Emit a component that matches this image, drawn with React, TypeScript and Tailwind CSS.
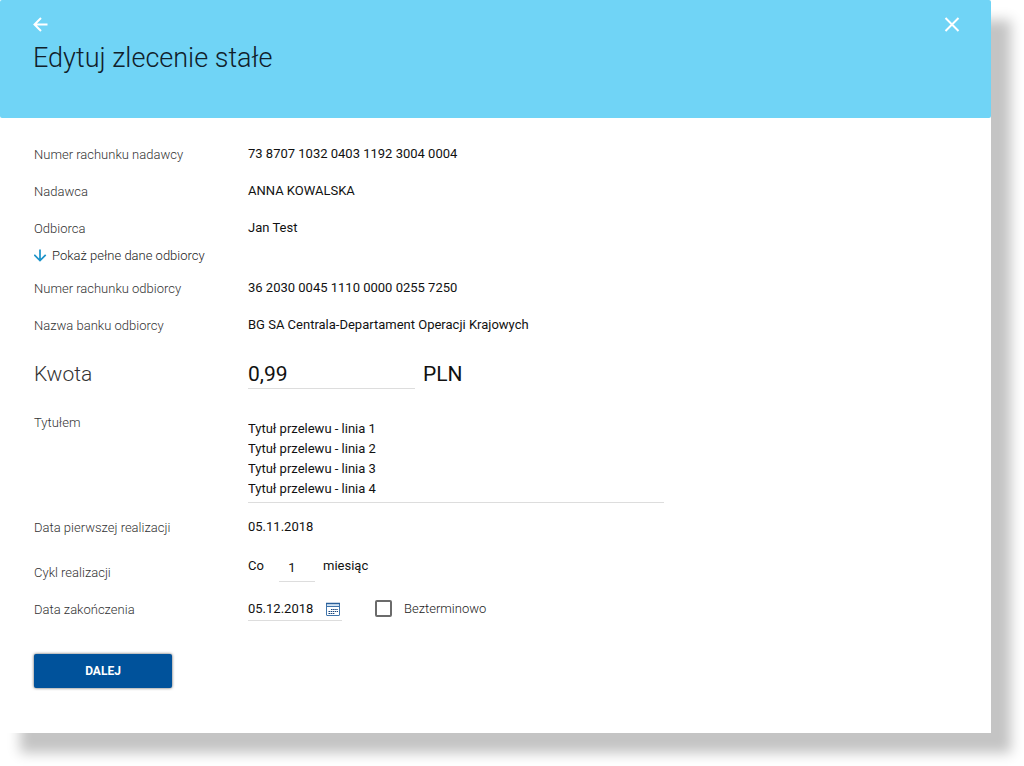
import { useState } from "react";
import type { ReactNode } from "react";

// ─── Icons ────────────────────────────────────────────────────────────────────
function BackIcon() {
  return (
    <svg viewBox="0 0 16 16" className="h-4 w-4" fill="none" stroke="currentColor" strokeWidth="2">
      <path d="M14.5 8.5H2M8 2 1.5 8.5 8 15" />
    </svg>
  );
}

function CloseIcon() {
  return (
    <svg viewBox="0 0 16 16" className="h-4 w-4" fill="none" stroke="currentColor" strokeWidth="2">
      <path d="M1.5 2 14.5 15M14.5 2 1.5 15" />
    </svg>
  );
}

function DownIcon() {
  return (
    <svg viewBox="0 0 14 14" className="h-3.5 w-3.5" fill="none" stroke="currentColor" strokeWidth="1.7">
      <path d="M6 0.5V11.5M0.3 5.8 6 11.5 11.7 5.8" />
    </svg>
  );
}

function CalendarIcon() {
  return (
    <svg viewBox="0 0 16 16" className="h-4 w-4" fill="none">
      <rect x="1.5" y="2.5" width="13" height="12" rx="0.5" stroke="#3f74ab" />
      <path d="M1 2.5H15" stroke="#2a5f9a" strokeWidth="1.5" />
      <path d="M2 4H14" stroke="#a9c8e6" />
      <path d="M2 5.5H14" stroke="#3f74ab" />
      <path d="M6 8.5H13M3.5 10.5H13M3.5 12.5H10" stroke="#17457c" strokeDasharray="1.5 0.6" />
    </svg>
  );
}

// ─── Form row ─────────────────────────────────────────────────────────────────
function Row({ label, htmlFor, children }: { label: string; htmlFor?: string; children: ReactNode }) {
  return (
    <div className="grid min-h-[37px] grid-cols-[214px_1fr] items-center">
      {htmlFor ? (
        <label htmlFor={htmlFor} className="font-light text-[#333]">
          {label}
        </label>
      ) : (
        <span className="font-light text-[#333]">{label}</span>
      )}
      <div className="pb-0.5">{children}</div>
    </div>
  );
}

// ─── Page ─────────────────────────────────────────────────────────────────────
export default function App() {
  const [amount, setAmount] = useState("0,99");
  const [title, setTitle] = useState(
    [1, 2, 3, 4].map((n) => `Tytuł przelewu - linia ${n}`).join("\n")
  );
  const [cycle, setCycle] = useState("1");
  const [endDate, setEndDate] = useState("05.12.2018");
  const [indefinite, setIndefinite] = useState(false);

  return (
    <div className="bg-white pr-[33px] pb-[33px] font-[Roboto,sans-serif] text-[13px] leading-5 text-[#111]">
      <main className="bg-white shadow-[20px_20px_12px_#c4c4c4]">
        <header className="h-[118px] rounded-xs bg-[#70d4f6] pt-4 pr-[31px] pl-[33px]">
          <div className="flex justify-between text-white">
            <button type="button" aria-label="Wstecz">
              <BackIcon />
            </button>
            <button type="button" aria-label="Zamknij">
              <CloseIcon />
            </button>
          </div>
          <h1 className="mt-2 text-[27px] leading-9 font-light text-[#10202a]">Edytuj zlecenie stałe</h1>
        </header>

        <form className="px-[34px] pt-[18px] pb-[45px]" onSubmit={(e) => e.preventDefault()}>
          <Row label="Numer rachunku nadawcy">73 8707 1032 0403 1192 3004 0004</Row>
          <Row label="Nadawca">ANNA KOWALSKA</Row>
          <Row label="Odbiorca">Jan Test</Row>
          <button type="button" className="mb-[5px] flex h-[18px] items-center gap-1 font-light text-[#222]">
            <span className="text-[#1c93c9]">
              <DownIcon />
            </span>
            Pokaż pełne dane odbiorcy
          </button>
          <Row label="Numer rachunku odbiorcy">36 2030 0045 1110 0000 0255 7250</Row>
          <Row label="Nazwa banku odbiorcy">BG SA Centrala-Departament Operacji Krajowych</Row>

          <div className="grid h-[60px] grid-cols-[214px_1fr] items-center text-[21px]">
            <label htmlFor="amount" className="font-light text-[#333]">
              Kwota
            </label>
            <div className="flex items-center gap-2">
              <input
                id="amount"
                value={amount}
                onChange={(e) => setAmount(e.target.value)}
                className="h-[30px] w-[167px] border-b border-[#ddd] pt-px outline-none"
              />
              <span>PLN</span>
            </div>
          </div>

          <div className="grid grid-cols-[214px_1fr] items-start pt-2 pb-1.5">
            <label htmlFor="title" className="pt-px font-light text-[#333]">
              Tytułem
            </label>
            <textarea
              id="title"
              rows={4}
              value={title}
              onChange={(e) => setTitle(e.target.value)}
              className="mt-[7px] block w-full max-w-[416px] resize-none overflow-hidden border-b border-[#ddd] pb-[3px] outline-none"
            />
          </div>

          <Row label="Data pierwszej realizacji">05.11.2018</Row>

          <div className="grid h-[45px] grid-cols-[214px_1fr] items-center">
            <label htmlFor="cycle" className="pt-2 font-light text-[#333]">
              Cykl realizacji
            </label>
            <div className="flex items-start">
              <span className="w-[31px]">Co</span>
              <input
                id="cycle"
                value={cycle}
                onChange={(e) => setCycle(e.target.value)}
                className="h-[26px] w-9 border-b border-[#ddd] pr-2.5 pb-0.5 text-center outline-none"
              />
              <span className="pl-2">miesiąc</span>
            </div>
          </div>

          <Row label="Data zakończenia" htmlFor="end-date">
            <div className="flex items-center">
              <div className="flex h-6 w-[94px] items-center border-b border-[#ddd] pt-0.5">
                <input
                  id="end-date"
                  value={endDate}
                  onChange={(e) => setEndDate(e.target.value)}
                  className="w-[77px] outline-none"
                />
                <button type="button" aria-label="Wybierz datę">
                  <CalendarIcon />
                </button>
              </div>
              <label className="ml-[33px] flex items-center gap-3 font-light text-[#222]">
                <input
                  type="checkbox"
                  checked={indefinite}
                  onChange={(e) => setIndefinite(e.target.checked)}
                  className="h-[17px] w-[17px] appearance-none rounded-xs border-2 border-[#6b6b6b] checked:bg-[#00529b]"
                />
                Bezterminowo
              </label>
            </div>
          </Row>

          <button
            type="submit"
            className="mt-[26px] block h-[34px] w-[138px] rounded-xs bg-[#00529b] text-xs font-bold text-white shadow-[0_0_3px_#555]"
          >
            DALEJ
          </button>
        </form>
      </main>
    </div>
  );
}
